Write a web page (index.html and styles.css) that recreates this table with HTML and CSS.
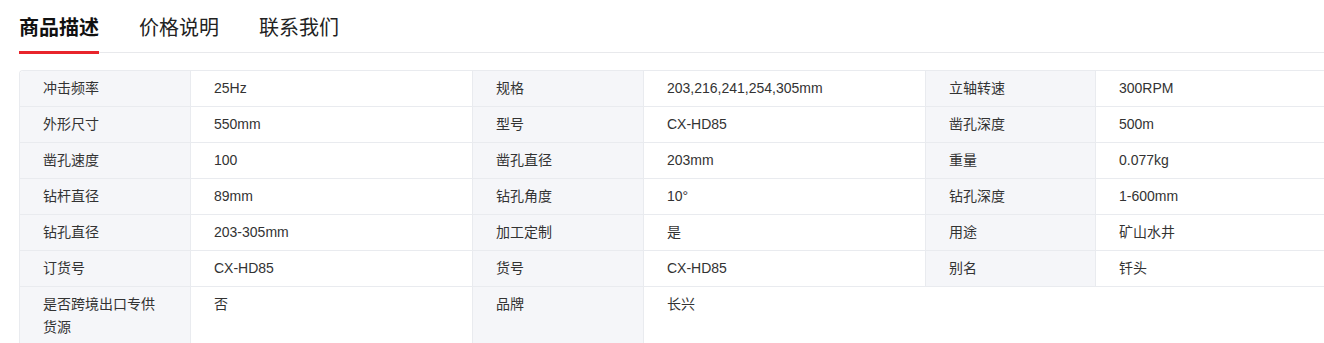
FILE: index.html
```html
<!DOCTYPE html>
<html lang="zh-CN">
<head>
<meta charset="utf-8">
<title>商品描述</title>
<link rel="stylesheet" href="styles.css">
</head>
<body>
<div class="page">
  <nav class="tabs">
    <div class="tab active">商品描述</div>
    <div class="tab">价格说明</div>
    <div class="tab">联系我们</div>
  </nav>
  <table class="attrs">
    <colgroup>
      <col class="c-label1"><col class="c-value1">
      <col class="c-label1"><col class="c-value1">
      <col class="c-label2"><col class="c-value2">
    </colgroup>
    <tbody>
      <tr>
        <td class="lb">冲击频率</td><td class="vl">25Hz</td>
        <td class="lb">规格</td><td class="vl">203,216,241,254,305mm</td>
        <td class="lb">立轴转速</td><td class="vl">300RPM</td>
      </tr>
      <tr>
        <td class="lb">外形尺寸</td><td class="vl">550mm</td>
        <td class="lb">型号</td><td class="vl">CX-HD85</td>
        <td class="lb">凿孔深度</td><td class="vl">500m</td>
      </tr>
      <tr>
        <td class="lb">凿孔速度</td><td class="vl">100</td>
        <td class="lb">凿孔直径</td><td class="vl">203mm</td>
        <td class="lb">重量</td><td class="vl">0.077kg</td>
      </tr>
      <tr>
        <td class="lb">钻杆直径</td><td class="vl">89mm</td>
        <td class="lb">钻孔角度</td><td class="vl">10°</td>
        <td class="lb">钻孔深度</td><td class="vl">1-600mm</td>
      </tr>
      <tr>
        <td class="lb">钻孔直径</td><td class="vl">203-305mm</td>
        <td class="lb">加工定制</td><td class="vl">是</td>
        <td class="lb">用途</td><td class="vl">矿山水井</td>
      </tr>
      <tr>
        <td class="lb">订货号</td><td class="vl">CX-HD85</td>
        <td class="lb">货号</td><td class="vl">CX-HD85</td>
        <td class="lb">别名</td><td class="vl">钎头</td>
      </tr>
      <tr class="last">
        <td class="lb">是否跨境出口专供货源</td><td class="vl">否</td>
        <td class="lb">品牌</td><td class="vl end">长兴</td>
      </tr>
    </tbody>
  </table>
</div>
</body>
</html>
```

FILE: styles.css
```css
html, body {
  margin: 0;
  padding: 0;
  background: #ffffff;
}

body {
  font-family: "Liberation Sans", "Noto Sans CJK SC", Arial, sans-serif;
  color: #333333;
  overflow: hidden;
}

.page {
  padding-left: 19px;
  overflow: hidden;
}

.tabs {
  display: flex;
  gap: 40px;
  padding-top: 13px;
  border-bottom: 1px solid #e8e9ec;
}

.tab {
  font-family: "Noto Sans CJK SC", sans-serif;
  font-size: 20px;
  line-height: 28px;
  color: #222222;
  padding-bottom: 10px;
  border-bottom: 3px solid transparent;
  margin-bottom: -2px;
  width: 80px;
  white-space: nowrap;
}

.tab.active {
  font-weight: 700;
  color: #111111;
  border-bottom-color: #e8242b;
}

.attrs {
  margin-top: 17px;
  width: 1359px;
  table-layout: fixed;
  border-collapse: separate;
  border-spacing: 0;
  border-top: 1px solid #e9ebef;
  border-left: 1px solid #e9ebef;
  border-top-left-radius: 4px;
  font-size: 14px;
  line-height: 21px;
}

.c-label1 { width: 171px; }
.c-value1 { width: 282px; }
.c-label2 { width: 170px; }
.c-value2 { width: 283px; }

.attrs td {
  padding: 7px 23px 7px 23px;
  border-right: 1px solid #e9ebef;
  border-bottom: 1px solid #e9ebef;
  vertical-align: top;
  color: #333333;
  word-break: break-all;
}

.attrs tr:first-child td:first-child {
  border-top-left-radius: 4px;
}

.attrs td.lb {
  background: #f5f6f9;
}

.attrs td.vl {
  background: #ffffff;
}

.attrs tr.last td {
  padding-top: 6px;
  padding-bottom: 8px;
  line-height: 23px;
}

.attrs tr.last td.end {
  border-right-color: transparent;
}
```
